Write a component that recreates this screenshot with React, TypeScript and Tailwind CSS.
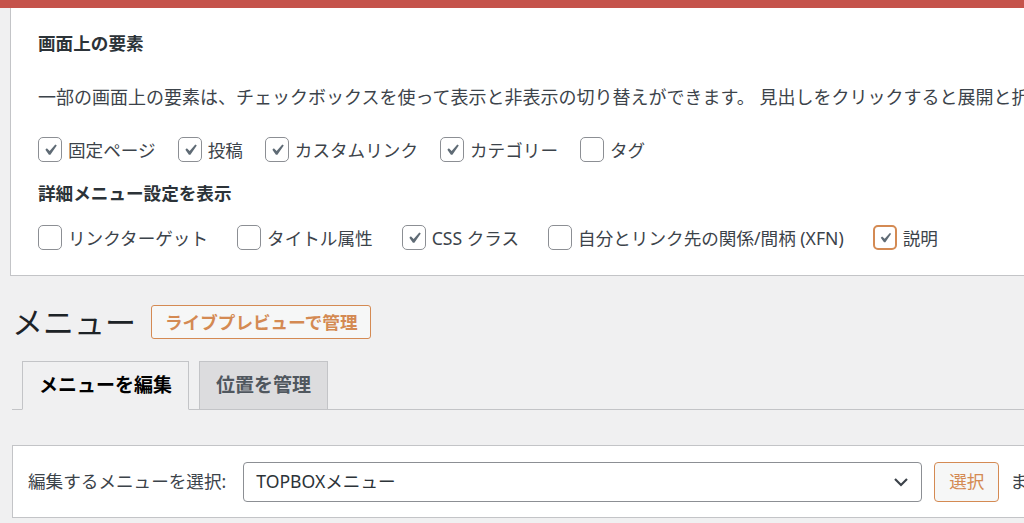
import React from "react";

const FONT = { fontFamily: '"Noto Sans", "Noto Sans CJK JP", sans-serif' };

type Opt = { label: string; checked?: boolean; focused?: boolean };

const baseOptions: Opt[] = [
  { label: "固定ページ", checked: true },
  { label: "投稿", checked: true },
  { label: "カスタムリンク", checked: true },
  { label: "カテゴリー", checked: true },
  { label: "タグ" },
];

const advancedOptions: Opt[] = [
  { label: "リンクターゲット" },
  { label: "タイトル属性" },
  { label: "CSS クラス", checked: true },
  { label: "自分とリンク先の関係/間柄 (XFN)" },
  { label: "説明", checked: true, focused: true },
];

function Checkbox({ checked, focused }: { checked?: boolean; focused?: boolean }) {
  return (
    <span
      className={
        focused
          ? "flex h-[25px] w-[24px] shrink-0 items-center justify-center rounded-[5px] border-[2.5px] border-[#d48a53] bg-white"
          : "flex h-[25px] w-[24px] shrink-0 items-center justify-center rounded-[5px] border-[1.5px] border-[#8c8f94] bg-white"
      }
    >
      {checked && (
        <svg viewBox="0 0 20 20" className="h-[24px] w-[24px]">
          <path d="M14.83 4.89l1.34.94-5.81 8.38H9.02L5.78 9.67l1.34-1.25 2.57 2.4z" fill="#5f6b75" />
        </svg>
      )}
    </span>
  );
}

function OptionRow({ items, gap }: { items: Opt[]; gap: string }) {
  return (
    <div className={`flex h-[30px] items-center whitespace-nowrap ${gap}`}>
      {items.map((o) => (
        <label key={o.label} className="flex items-center gap-[6px] text-[17.6px] text-[#3c434a]">
          <Checkbox checked={o.checked} focused={o.focused} />
          <span>{o.label}</span>
        </label>
      ))}
    </div>
  );
}

export default function App() {
  return (
    <div className="h-[523px] w-[1024px] overflow-hidden bg-[#f0f0f1]" style={FONT}>
      <div className="h-[8px] bg-[#c5534b]" />

      {/* 表示オプション */}
      <div className="ml-[10px] w-[1060px] border-b border-l border-[#c3c4c7] bg-white pb-[22px] pl-[27px] pt-[20px]">
        <div className="flex h-[30px] items-center text-[17.6px] font-semibold text-[#2c3338]">画面上の要素</div>
        <p className="mt-[24px] flex h-[30px] items-center whitespace-nowrap text-[18px] text-[#3c434a]">
          一部の画面上の要素は、チェックボックスを使って表示と非表示の切り替えができます。 見出しをクリックすると展開と折りたたみができます。
        </p>
        <div className="mt-[23px]">
          <OptionRow items={baseOptions} gap="gap-[22px]" />
        </div>
        <div className="mt-[13px] flex h-[30px] items-center text-[17.6px] font-semibold text-[#2c3338]">
          詳細メニュー設定を表示
        </div>
        <div className="mt-[15px]">
          <OptionRow items={advancedOptions} gap="gap-[29px]" />
        </div>
      </div>

      {/* タイトル */}
      <div className="mt-[29px] flex h-[34px] items-center pl-[12px]">
        <h1 className="text-[31px] font-normal leading-none text-[#1d2327]">メニュー</h1>
        <button className="ml-[15px] h-[34px] rounded-[3px] border border-[#d48a53] bg-[#f6f7f7] px-[13px] text-[17.6px] font-semibold text-[#d48a53]">
          ライブプレビューで管理
        </button>
      </div>

      {/* タブ */}
      <div className="ml-[12px] mt-[22px] flex h-[49px] items-end border-b border-[#c3c4c7] pl-[10px]">
        <div className="-mb-px flex h-[49px] w-[167px] items-center justify-center border border-b-[#f0f0f1] border-[#c3c4c7] bg-[#f0f0f1] text-[19px] font-semibold text-black">
          メニューを編集
        </div>
        <div className="ml-[10px] flex h-[48px] w-[129px] items-center justify-center border border-b-0 border-[#c3c4c7] bg-[#dcdcde] text-[19px] font-semibold text-[#50575e]">
          位置を管理
        </div>
      </div>

      {/* メニュー選択 */}
      <div className="ml-[12px] mt-[35px] flex h-[73px] w-[1060px] items-center whitespace-nowrap border border-[#c3c4c7] bg-white pl-[15px] text-[17.6px] text-[#3c434a]">
        <span className="shrink-0">編集するメニューを選択:</span>
        <div className="ml-[17px] flex h-[40px] w-[679px] shrink-0 items-center justify-between rounded-[4px] border border-[#8c8f94] bg-white pl-[12px] pr-[12px] text-[#2c3338]">
          <span>TOPBOXメニュー</span>
          <svg viewBox="0 0 16 10" className="h-[10px] w-[16px]">
            <path d="M2 2l6 6 6-6" fill="none" stroke="#3c434a" strokeWidth="2.2" />
          </svg>
        </div>
        <button className="ml-[12px] h-[40px] w-[65px] shrink-0 rounded-[4px] border border-[#d48a53] bg-[#f6f7f7] text-[17.6px] text-[#d48a53]">
          選択
        </button>
        <span className="ml-[11px] shrink-0">または新規メニューを作成しましょう。</span>
      </div>
    </div>
  );
}
